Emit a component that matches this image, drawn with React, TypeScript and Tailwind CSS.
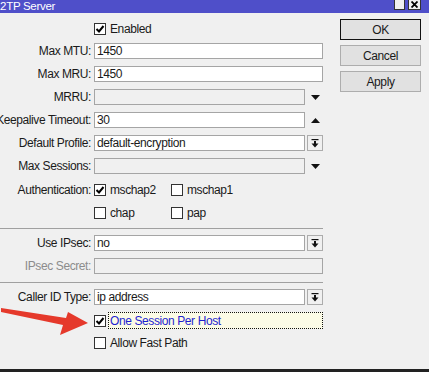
import React from "react";

const font = { fontFamily: '"Liberation Sans", Arial, sans-serif' };

function Check({ checked }: { checked?: boolean }) {
  return (
    <div className="w-[12px] h-[12px] shrink-0 border border-[#333333] bg-white flex items-center justify-center">
      {checked && (
        <svg width="10" height="10" viewBox="0 0 10 10">
          <path d="M1.5 5 L4 7.5 L8.5 2" fill="none" stroke="#000" strokeWidth="2" />
        </svg>
      )}
    </div>
  );
}

function Row({ label, grey, children }: { label: string; grey?: boolean; children: React.ReactNode }) {
  return (
    <div className="flex h-[16px] items-center">
      <div className={`w-[91px] shrink-0 flex justify-end whitespace-nowrap leading-none ${grey ? "text-[#8c8c8c]" : "text-[#1a1a1a]"}`}>
        <span>{label}</span>
      </div>
      <div className="ml-[3px] flex flex-1 h-full items-center">{children}</div>
    </div>
  );
}

function Field({ value, disabled }: { value?: string; disabled?: boolean }) {
  return (
    <div
      className={`h-full flex-1 border border-[#a5a5a5] px-[2px] flex items-center leading-none text-[#1a1a1a] ${
        disabled ? "bg-[#f0f0f0]" : "bg-white"
      }`}
    >
      {value}
    </div>
  );
}

function DropBtn() {
  return (
    <div className="ml-[2px] w-[16px] h-full border border-[#acacac] bg-[#f0f0f0] flex items-center justify-center">
      <svg width="8" height="9" viewBox="0 0 8 9">
        <rect x="0.5" y="0" width="7" height="1.2" fill="#111" />
        <rect x="3" y="2" width="2" height="3" fill="#111" />
        <path d="M0.5 4.5 L7.5 4.5 L4 8.5 Z" fill="#111" />
      </svg>
    </div>
  );
}

function Arrow({ up }: { up?: boolean }) {
  return (
    <div className="ml-[2px] w-[16px] h-full flex items-center justify-center">
      <svg width="9" height="5" viewBox="0 0 9 5">
        {up ? <path d="M0 5 L9 5 L4.5 0 Z" fill="#111" /> : <path d="M0 0 L9 0 L4.5 5 Z" fill="#111" />}
      </svg>
    </div>
  );
}

function CheckItem({ label, checked, width }: { label: string; checked?: boolean; width?: string }) {
  return (
    <div className={`flex items-center gap-[4px] leading-none text-[#1a1a1a] ${width ?? ""}`}>
      <Check checked={checked} />
      <span>{label}</span>
    </div>
  );
}

function Btn({ label, main }: { label: string; main?: boolean }) {
  return (
    <div
      className={`h-[21px] flex items-center justify-center bg-[#e1e1e1] border leading-none text-[#1a1a1a] ${
        main ? "border-[#111111]" : "border-[#adadad]"
      }`}
    >
      {label}
    </div>
  );
}

export default function App() {
  return (
    <div
      className="relative w-[429px] h-[372px] overflow-hidden bg-[#f0f0f0] text-[12px] tracking-[-0.4px] border-b-[3px] border-[#222222] flex flex-col"
      style={font}
    >
      <div className="h-[13px] shrink-0 bg-[#4f4fc9] flex items-center relative">
        <span className="ml-[-6px] text-white text-[11.5px] leading-none tracking-[-0.3px]">L2TP Server</span>
        <div className="absolute top-[-1px] left-[394px] w-[11px] h-[11px] bg-[#f0f0f0] border border-[#333]" />
        <div className="absolute top-[-1px] left-[408px] w-[13px] h-[11px] bg-[#f0f0f0] border border-[#333] flex items-center justify-center">
          <svg width="7" height="7" viewBox="0 0 7 7">
            <path d="M0.5 0.5 L6.5 6.5 M6.5 0.5 L0.5 6.5" stroke="#000" strokeWidth="1.8" />
          </svg>
        </div>
      </div>

      <div className="flex flex-1">
        <div className="w-[323px] flex flex-col">
          <div className="mt-[8px] flex h-[16px] items-center">
            <div className="ml-[94px]">
              <CheckItem label="Enabled" checked />
            </div>
          </div>
          <div className="mt-[6px]">
            <Row label="Max MTU:">
              <Field value="1450" />
            </Row>
          </div>
          <div className="mt-[7px]">
            <Row label="Max MRU:">
              <Field value="1450" />
            </Row>
          </div>
          <div className="mt-[7px]">
            <Row label="MRRU:">
              <Field disabled />
              <Arrow />
            </Row>
          </div>
          <div className="mt-[7px]">
            <Row label="Keepalive Timeout:">
              <Field value="30" />
              <Arrow up />
            </Row>
          </div>
          <div className="mt-[7px]">
            <Row label="Default Profile:">
              <Field value="default-encryption" />
              <DropBtn />
            </Row>
          </div>
          <div className="mt-[7px]">
            <Row label="Max Sessions:">
              <Field disabled />
              <Arrow />
            </Row>
          </div>
          <div className="mt-[8px]">
            <Row label="Authentication:">
              <CheckItem label="mschap2" checked width="w-[77px]" />
              <CheckItem label="mschap1" />
            </Row>
          </div>
          <div className="mt-[7px]">
            <Row label="">
              <CheckItem label="chap" width="w-[77px]" />
              <CheckItem label="pap" />
            </Row>
          </div>
          <div className="mt-[7px] h-px bg-[#a0a0a0]" />
          <div className="mt-[6px]">
            <Row label="Use IPsec:">
              <Field value="no" />
              <DropBtn />
            </Row>
          </div>
          <div className="mt-[7px]">
            <Row label="IPsec Secret:" grey>
              <Field disabled />
            </Row>
          </div>
          <div className="mt-[8px] h-px bg-[#a0a0a0]" />
          <div className="mt-[6px]">
            <Row label="Caller ID Type:">
              <Field value="ip address" />
              <DropBtn />
            </Row>
          </div>
          <div className="mt-[7px] flex h-[17px] items-center pl-[94px]">
            <Check checked />
            <div className="ml-[2px] flex-1 h-full border border-dotted border-[#111] bg-[#fbfbe6] flex items-center pl-[1px] leading-none text-[#1f1fd0]">
              One Session Per Host
            </div>
          </div>
          <div className="mt-[6px] flex h-[16px] items-center pl-[94px]">
            <CheckItem label="Allow Fast Path" />
          </div>
        </div>

        <div className="ml-[17px] w-[81px] mt-[6px] flex flex-col gap-[5px]">
          <Btn label="OK" main />
          <Btn label="Cancel" />
          <Btn label="Apply" />
        </div>
      </div>

      <svg className="absolute left-0 top-0 pointer-events-none" width="429" height="372" viewBox="0 0 429 372">
        <polygon points="1,308 66,318 68,312 88,323 60,335 63,325 1,312" fill="#e5392b" />
      </svg>
    </div>
  );
}
